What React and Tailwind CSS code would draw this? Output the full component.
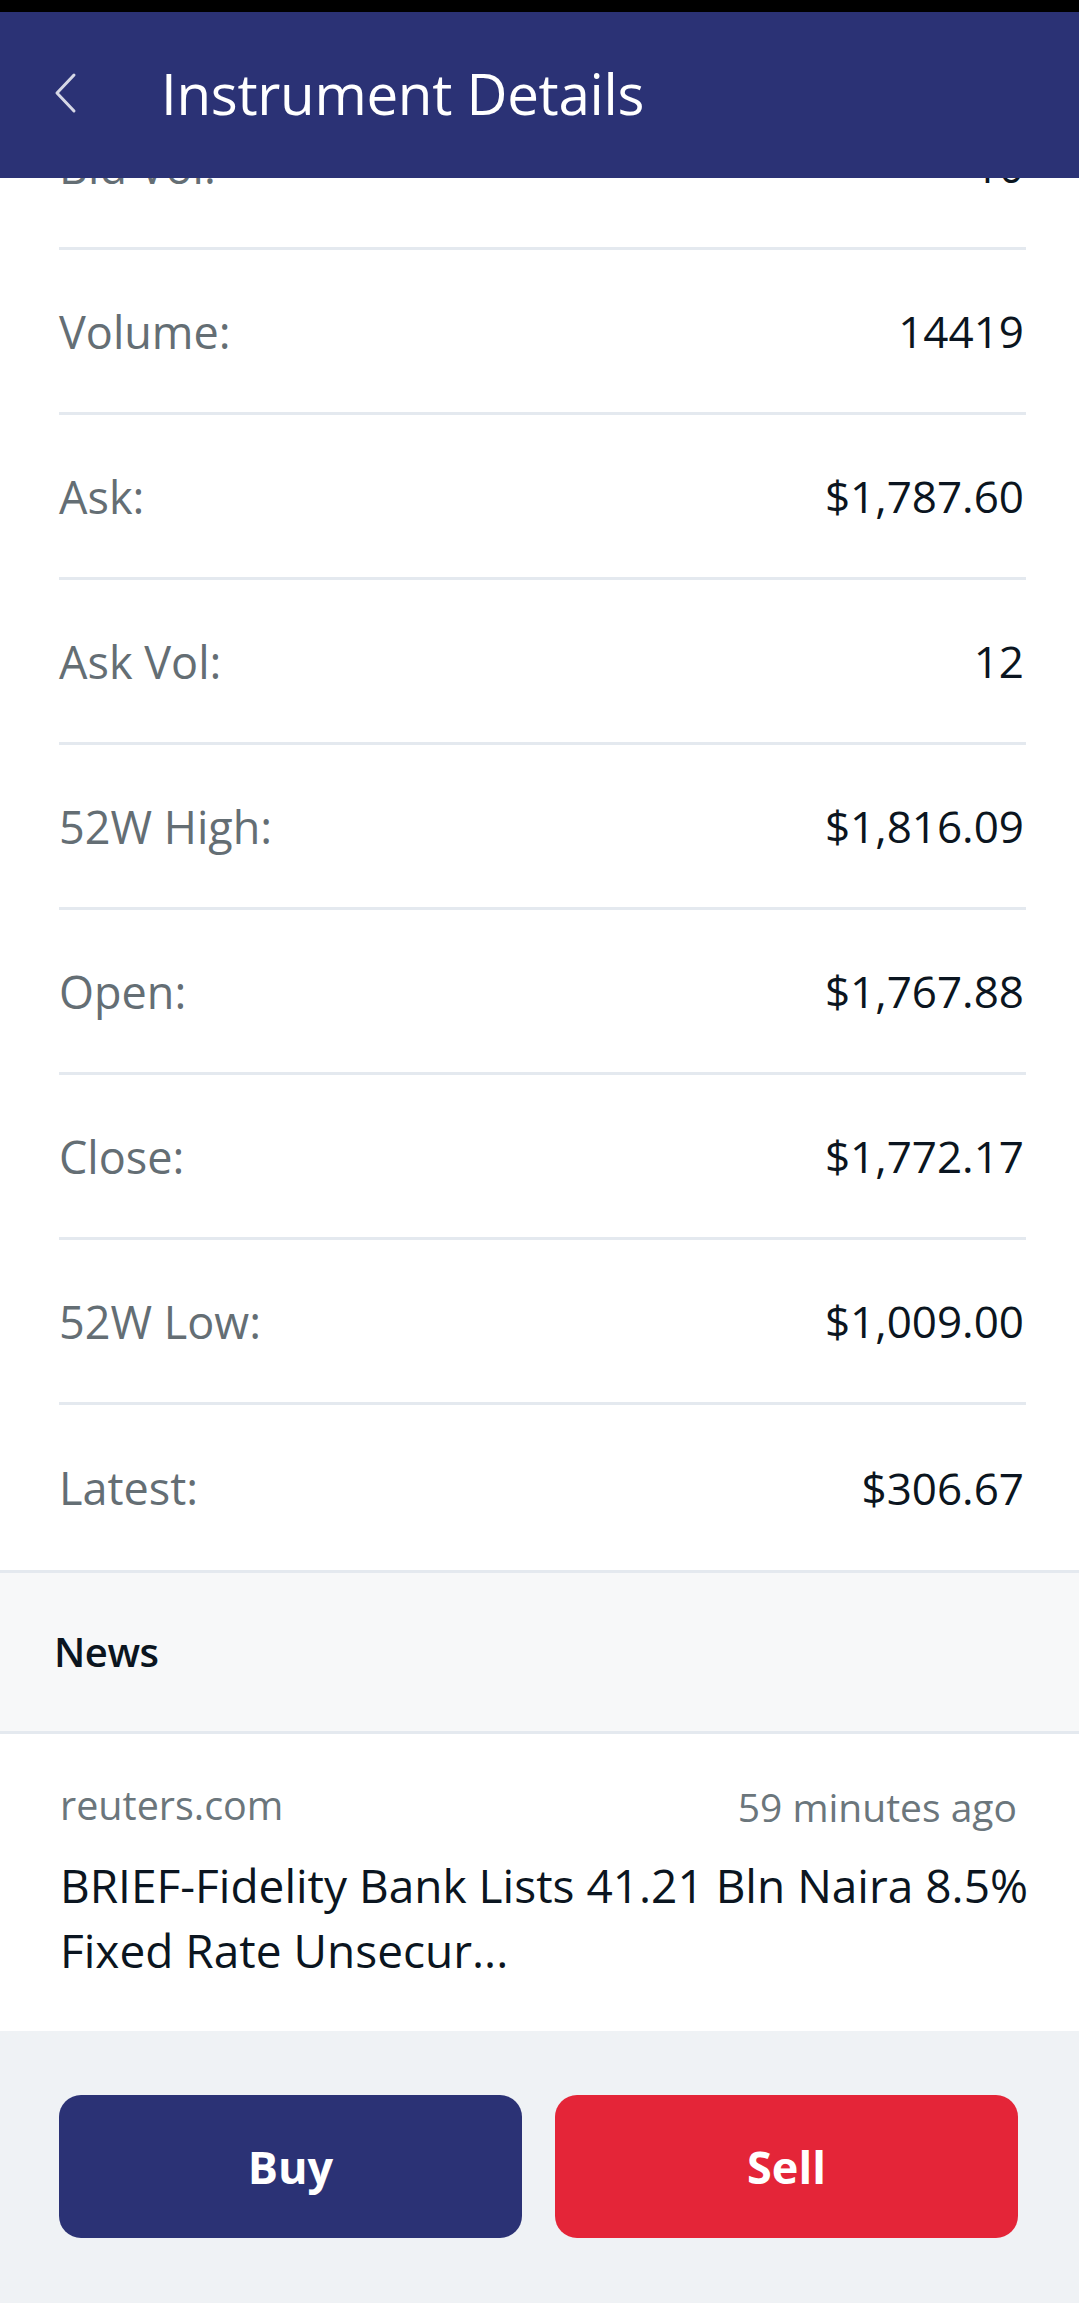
const rows = [
  ["Bid Vol:", "10"],
  ["Volume:", "14419"],
  ["Ask:", "$1,787.60"],
  ["Ask Vol:", "12"],
  ["52W High:", "$1,816.09"],
  ["Open:", "$1,767.88"],
  ["Close:", "$1,772.17"],
  ["52W Low:", "$1,009.00"],
  ["Latest:", "$306.67"],
];

export default function App() {
  return (
    <div
      className="w-[1079px] h-[2303px] bg-white flex flex-col overflow-hidden"
      style={{ fontFamily: "'Open Sans', 'Noto Sans', sans-serif" }}
    >
      <div className="h-[12px] bg-black shrink-0" />
      <div className="relative z-10 h-[166px] shrink-0 bg-[#2b3275] flex items-center">
        <svg
          className="ml-[52px] w-[26px] h-[42px] -mt-[4px]"
          viewBox="0 0 26 42"
          fill="none"
        >
          <polyline
            points="22,3 5,21 22,39"
            stroke="#d6d8e6"
            strokeWidth="3"
            strokeLinecap="round"
            strokeLinejoin="round"
          />
        </svg>
        <div className="ml-[83px] -mt-[2px] text-white text-[56.5px] leading-none tracking-[-0.3px]">
          Instrument Details
        </div>
      </div>

      <div className="flex-1 flex flex-col overflow-hidden">
        <div className="-mt-[93px] flex flex-col">
          {rows.map(([label, value], i) => (
            <div
              key={label}
              className={`ml-[59px] mr-[53px] h-[165px] flex items-center justify-between ${
                i < rows.length - 1 ? "border-b-[3px] border-[#e4e9ef]" : ""
              }`}
            >
              <span className="text-[45px] text-[#646e74] leading-none">{label}</span>
              <span className="text-[44px] text-[#0b1520] leading-none mr-[2px]">{value}</span>
            </div>
          ))}
        </div>

        <div className="h-[164px] shrink-0 bg-[#f7f8f9] border-t-[3px] border-b-[3px] border-[#e4e9ef] flex items-center pl-[54px]">
          <span className="text-[40px] font-semibold text-[#0b1520] leading-none tracking-[-0.5px]">News</span>
        </div>

        <div className="h-[297px] shrink-0 bg-white pl-[60px] pr-[62px] pt-[52px]">
          <div className="flex justify-between items-center h-[40px]">
            <span className="text-[39.5px] text-[#6b767c] leading-none">reuters.com</span>
            <span className="text-[39px] text-[#6b767c] leading-none">59 minutes ago</span>
          </div>
          <div className="mt-[27px] text-[46px] leading-[65px] text-[#0b1520] whitespace-nowrap -mr-[20px]">
            BRIEF-Fidelity Bank Lists 41.21 Bln Naira 8.5%
            <br />
            Fixed Rate Unsecur...
          </div>
        </div>

        <div className="flex-1 bg-[#eff2f5] pt-[64px] pl-[59px] pr-[61px] flex gap-[33px]">
          <button className="flex-1 h-[143px] rounded-[22px] bg-[#2b3275] text-white text-[45px] font-bold">
            Buy
          </button>
          <button className="flex-1 h-[143px] rounded-[22px] bg-[#e42538] text-white text-[45px] font-bold">
            Sell
          </button>
        </div>
      </div>
    </div>
  );
}
